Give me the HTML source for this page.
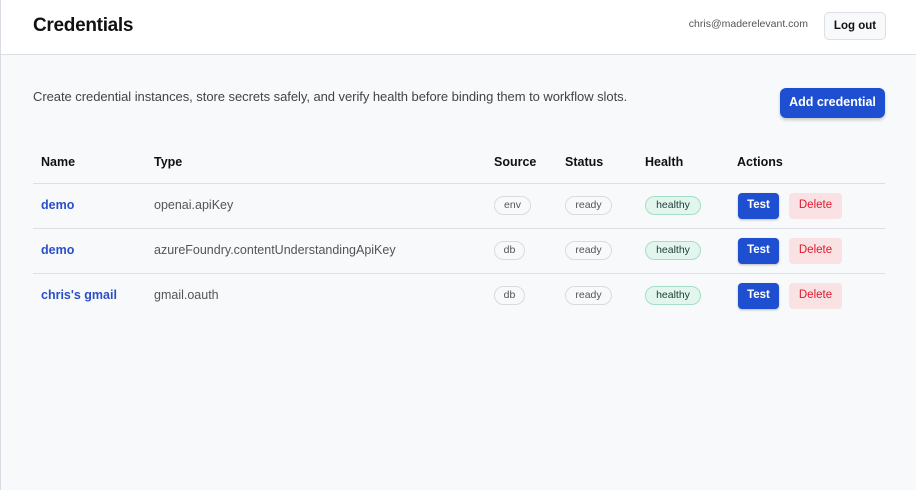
<!DOCTYPE html>
<html><head><meta charset="utf-8"><style>
*{margin:0;padding:0;box-sizing:border-box}
body{width:916px;height:490px;overflow:hidden;background:#f8f9fb;font-family:"Liberation Sans",sans-serif;position:relative}
.a{position:absolute;white-space:nowrap}
.hdr{position:absolute;left:0;top:0;width:916px;height:55px;background:#fff;border-bottom:1px solid #dcdfe5}
.lb{position:absolute;left:0;top:0;width:1px;height:490px;background:#d9dce2}
.line{position:absolute;left:33px;width:852px;height:1px;background:#dcdfe5}
.th{font-size:12.5px;font-weight:bold;color:#111;top:155px}
.nm{font-size:12.5px;font-weight:bold;color:#2a4fc9}
.ty{font-size:12.5px;color:#555}
.pill{position:absolute;height:19px;border:1px solid #d8dbe0;border-radius:10px;font-size:10.5px;color:#555;text-align:center;line-height:17px;background:#f8f9fb}
.hl{background:#e2f6ee;border-color:#a3dfc4;color:#1d3b33}
.test{position:absolute;width:41px;height:26px;background:#1f4fd1;color:#fff;border-radius:4px;font-size:11.5px;font-weight:bold;text-align:center;line-height:25px;box-shadow:0 1px 2px rgba(0,0,0,.25)}
.del{position:absolute;width:53px;height:26px;background:#f9e1e4;color:#e0192d;border-radius:4px;font-size:11.5px;text-align:center;line-height:25px}
</style></head><body>
<div class="hdr"></div>
<div class="lb"></div>
<div class="a" style="left:33px;top:15px;font-size:19px;font-weight:bold;color:#111;letter-spacing:-0.3px">Credentials</div>
<div class="a" style="left:684px;top:18px;font-size:10.5px;color:#555;width:124px;text-align:right">chris@maderelevant.com</div>
<div class="a" style="left:824px;top:12px;width:62px;height:28px;border:1px solid #dcdfe5;border-radius:5px;background:#f8f9fb;font-size:11.5px;font-weight:bold;color:#111;text-align:center;line-height:26px">Log out</div>
<div class="a" style="left:33px;top:89px;font-size:13px;color:#444;letter-spacing:-0.05px">Create credential instances, store secrets safely, and verify health before binding them to workflow slots.</div>
<div class="a" style="left:780px;top:88px;width:105px;height:30px;background:#1f4fd1;border-radius:6px;color:#fff;font-size:12.5px;font-weight:bold;text-align:center;line-height:29px;box-shadow:0 2px 3px rgba(0,0,0,.2)">Add credential</div>

<div class="a th" style="left:41px">Name</div>
<div class="a th" style="left:154px">Type</div>
<div class="a th" style="left:494px">Source</div>
<div class="a th" style="left:565px">Status</div>
<div class="a th" style="left:645px">Health</div>
<div class="a th" style="left:737px">Actions</div>
<div class="line" style="top:183px"></div>
<div class="line" style="top:228px"></div>
<div class="line" style="top:273px"></div>

<div class="a nm" style="left:41px;top:198px">demo</div>
<div class="a ty" style="left:154px;top:198px">openai.apiKey</div>
<div class="pill" style="left:494px;top:196px;width:37px">env</div>
<div class="pill" style="left:565px;top:196px;width:47px">ready</div>
<div class="pill hl" style="left:645px;top:196px;width:56px">healthy</div>
<div class="test" style="left:738px;top:193px">Test</div>
<div class="del" style="left:789px;top:193px">Delete</div>

<div class="a nm" style="left:41px;top:243px">demo</div>
<div class="a ty" style="left:154px;top:243px">azureFoundry.contentUnderstandingApiKey</div>
<div class="pill" style="left:494px;top:241px;width:31px">db</div>
<div class="pill" style="left:565px;top:241px;width:47px">ready</div>
<div class="pill hl" style="left:645px;top:241px;width:56px">healthy</div>
<div class="test" style="left:738px;top:238px">Test</div>
<div class="del" style="left:789px;top:238px">Delete</div>

<div class="a nm" style="left:41px;top:288px">chris's gmail</div>
<div class="a ty" style="left:154px;top:288px">gmail.oauth</div>
<div class="pill" style="left:494px;top:286px;width:31px">db</div>
<div class="pill" style="left:565px;top:286px;width:47px">ready</div>
<div class="pill hl" style="left:645px;top:286px;width:56px">healthy</div>
<div class="test" style="left:738px;top:283px">Test</div>
<div class="del" style="left:789px;top:283px">Delete</div>
</body></html>
